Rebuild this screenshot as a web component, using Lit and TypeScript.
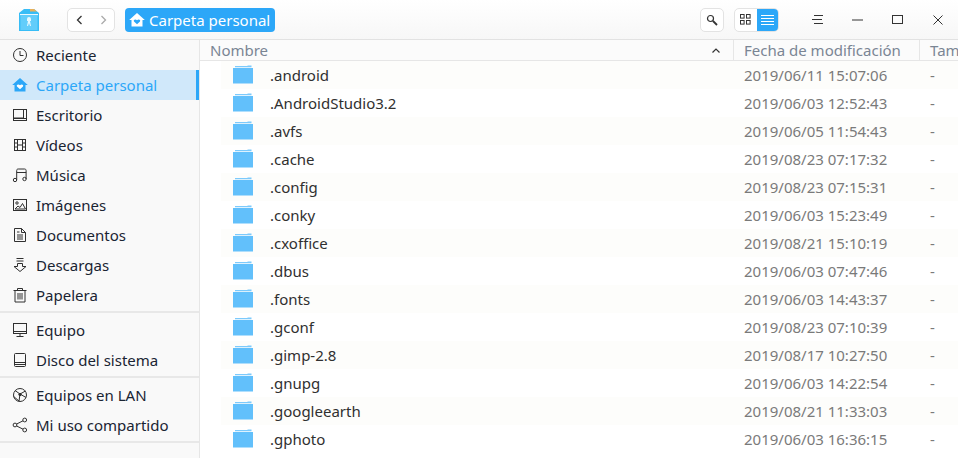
import { LitElement, html, css, svg } from "lit";
import { customElement } from "lit/decorators.js";

const s = (c: any, size = 16) => html`<svg class="ic" width=${size} height=${size} viewBox="0 0 16 16" fill="none" stroke="currentColor" stroke-width="1">${c}</svg>`;
const homeIcon = (col: string, heart: string) => html`<svg width="16" height="16" viewBox="0 0 16 16"><path fill=${col} d="M8 1 L15.8 8 L13.5 8 L13.5 14.5 L2.5 14.5 L2.5 8 L.2 8 Z"/><path fill=${heart} d="M8 12.2 L5 9.4 C4 8 6.4 6.5 8 8.2 C9.6 6.5 12 8 11 9.4 Z"/></svg>`;

const icons: Record<string, any> = {
  clock: s(svg`<circle cx="8" cy="8" r="6.5"/><path d="M8 4v4.5h3.5"/>`),
  desk: s(svg`<rect x="1.5" y="2.5" width="13" height="11"/><path d="M11.5 2.5v8.5h-10"/><path d="M1.5 11.5h13"/>`),
  video: s(svg`<rect x="2.5" y="2.5" width="11" height="11"/><path d="M5.5 2.5v11M10.5 2.5v11M2.5 6h3M2.5 10h3M10.5 6h3M10.5 10h3M5.5 8h5"/>`),
  music: s(svg`<circle cx="3" cy="13" r="1.7"/><circle cx="12.5" cy="12" r="1.7"/><path d="M4.7 13V3.5c0-1 .5-1.5 1.5-1.5h6.5c.7 0 1.4.5 1.4 1.5V12M4.7 5.5h9.5"/>`),
  image: s(svg`<rect x="1.5" y="2.5" width="13" height="11"/><circle cx="5" cy="6" r="1.2"/><path d="M3 12l3-3 2 1.5 2.5-4 3 5.5z"/>`),
  doc: s(svg`<path d="M2.5 1.5h7l4 4v9h-11z"/><path d="M9.5 1.5v4h4M5 5h2.5M5 8h6M5 10h6M5 12h6"/>`),
  down: s(svg`<path d="M4.5 1.5h7M4.5 4h7M5.5 6.5h5v3h3.5L8 14.5 2 9.5h3.5z"/>`),
  trash: s(svg`<path d="M1.5 3.5h13M5.5 3.5V1.5h5v2M3 3.5v11.5h10V3.5M6 6v6.5M8 6v6.5M10 6v6.5"/>`),
  pc: s(svg`<rect x="1.5" y="1.5" width="13" height="10"/><path d="M1.5 9.5h13M8 11.5v2.5M4.5 14.5h7"/>`),
  disk: s(svg`<rect x="2.5" y="1.5" width="11" height="13" rx="1"/><path d="M2.5 10.5h11M2.5 12.5h11"/>`),
  lan: s(svg`<circle cx="8" cy="8" r="6.5"/><path d="M3 3.5l5 3.5 5.5-3M8 7l-1 7.2M8 7l6 3.5M1.6 9.5l5.4 4.5" /><circle cx="8" cy="7.5" r="1.2" fill="currentColor"/>`),
  share: s(svg`<circle cx="3" cy="8" r="1.9"/><circle cx="12.7" cy="3" r="1.9"/><circle cx="12.7" cy="13" r="1.9"/><path d="M4.7 7l6.3-3.2M4.7 9l6.3 3.2"/>`),
};

const group1 = [
  ["clock", "Reciente"], ["home", "Carpeta personal"], ["desk", "Escritorio"], ["video", "Vídeos"], ["music", "Música"],
  ["image", "Imágenes"], ["doc", "Documentos"], ["down", "Descargas"], ["trash", "Papelera"],
];
const group2 = [["pc", "Equipo"], ["disk", "Disco del sistema"]];
const group3 = [["lan", "Equipos en LAN"], ["share", "Mi uso compartido"]];

const files = [
  [".android", "2019/06/11 15:07:06"], [".AndroidStudio3.2", "2019/06/03 12:52:43"], [".avfs", "2019/06/05 11:54:43"],
  [".cache", "2019/08/23 07:17:32"], [".config", "2019/08/23 07:15:31"], [".conky", "2019/06/03 15:23:49"],
  [".cxoffice", "2019/08/21 15:10:19"], [".dbus", "2019/06/03 07:47:46"], [".fonts", "2019/06/03 14:43:37"],
  [".gconf", "2019/08/23 07:10:39"], [".gimp-2.8", "2019/08/17 10:27:50"], [".gnupg", "2019/06/03 14:22:54"],
  [".googleearth", "2019/08/21 11:33:03"], [".gphoto", "2019/06/03 16:36:15"],
];

@customElement("app-root")
export class AppRoot extends LitElement {
  static styles = css`
    :host { display: block; width: 958px; height: 458px; overflow: hidden; background: #fff; font-family: "Noto Sans", sans-serif; font-size: 15px; color: #303030; }
    svg { display: block; flex: none; }
    .bar { height: 39px; border-bottom: 1px solid #e2e2e2; background: linear-gradient(#fff, #f7f7f7); display: flex; align-items: center; }
    .logo { margin-left: 19px; }
    .nav { margin-left: 28px; width: 46px; height: 22px; border: 1px solid #e3e3e3; border-radius: 5px; background: #fff; display: flex; }
    .nav span { flex: 1; display: flex; align-items: center; justify-content: center; }
    .crumb { margin-left: 10px; height: 24px; width: 150px; background: #2ca7f8; border-radius: 4px; color: #fff; display: flex; align-items: center; gap: 4px; padding-left: 4px; box-sizing: border-box; white-space: nowrap; }
    .spacer { flex: 1; }
    .search { width: 22px; height: 22px; border: 1px solid #e3e3e3; border-radius: 5px; background: #fff; display: flex; align-items: center; justify-content: center; }
    .views { margin-left: 10px; width: 43px; height: 22px; border: 1px solid #e3e3e3; border-radius: 5px; background: #fff; display: flex; overflow: hidden; }
    .views span { flex: 1; display: flex; align-items: center; justify-content: center; }
    .views .on { background: #2ca7f8; }
    .win { width: 40px; display: flex; justify-content: center; align-items: center; }
    .win.first { margin-left: 19px; }
    .main { display: flex; height: 418px; }
    .side { width: 199px; border-right: 1px solid #e6e6e6; background: #f9f9f9; flex: none; }
    .item { height: 30px; display: flex; align-items: center; color: #1a2433; padding-left: 12px; gap: 8px; white-space: nowrap; }
    .item .ic { color: #303030; }
    .item.active { background: #d0e8fa; color: #2ca7f8; border-right: 3px solid #2ca7f8; }
    .sep { height: 2px; background: #e8e8e8; margin: 1px 0 2px; }
    .content { flex: 1; min-width: 0; overflow: hidden; }
    .head { height: 20px; border-bottom: 1px solid #e6e6e6; display: flex; color: #7a8594; background: #fbfbfb; }
    .h { border-right: 1px solid #e6e6e6; box-sizing: border-box; line-height: 20px; padding-left: 10px; white-space: nowrap; flex: none; }
    .h.name { width: 534px; display: flex; align-items: center; justify-content: space-between; padding-right: 13px; }
    .h.date { width: 186px; }
    .h.size { border: 0; width: 38px; padding-left: 10px; }
    .rows { padding-left: 21px; }
    .row { height: 28px; display: flex; align-items: center; color: #303030; }
    .row:nth-child(odd) { background: #fdfdfb; }
    .folder { margin-left: 12px; }
    .fname { margin-left: 17px; width: 474px; flex: none; }
    .fdate { width: 186px; flex: none; color: #7a7a7a; }
    .fsize { color: #7a7a7a; }
  `;

  private item(i: string[], active = false) {
    return html`<div class="item ${active ? "active" : ""}">${i[0] === "home" ? homeIcon("#2ca7f8", "#fff") : icons[i[0]]}<span>${i[1]}</span></div>`;
  }

  render() {
    return html`
      <div class="bar">
        <svg class="logo" width="20" height="22" viewBox="0 0 20 22">
          <path d="M0 4 L5 0 H15 L20 4 V22 H0 Z" fill="#38bdf6"/>
          <path d="M11 0 H15 L18 2.5 H11 Z" fill="#e8b05a"/>
          <rect x="1" y="5" width="18" height="1.2" fill="#e9f8ff"/>
          <rect x="1.5" y="6.2" width="17" height="14.8" fill="#62cdfa"/>
          <path d="M10 8 a2 2 0 0 1 2 2 v2 h-1 l1 5 h-1 l-1-3 -1 3 h-1 l1-5 h-1 v-2 a2 2 0 0 1 2-2z" fill="#e4f8ff"/>
        </svg>
        <div class="nav">
          <span><svg width="10" height="12" viewBox="0 0 10 12" fill="none" stroke="#333" stroke-width="1.3"><path d="M6.5 2 L2.5 6 L6.5 10"/></svg></span>
          <span><svg width="10" height="12" viewBox="0 0 10 12" fill="none" stroke="#aaa" stroke-width="1.3"><path d="M3.5 2 L7.5 6 L3.5 10"/></svg></span>
        </div>
        <div class="crumb">${homeIcon("#fff", "#2ca7f8")}<span>Carpeta personal</span></div>
        <div class="spacer"></div>
        <div class="search"><svg width="12" height="12" viewBox="0 0 12 12" fill="none" stroke="#333"><circle cx="4.5" cy="4.5" r="3" stroke-width="1.2"/><path d="M7 7 L11 11" stroke-width="1.8"/></svg></div>
        <div class="views">
          <span><svg width="11" height="11" viewBox="0 0 11 11" fill="none" stroke="#333"><rect x=".5" y=".5" width="3.6" height="3.6"/><rect x="6.5" y=".5" width="3.6" height="3.6"/><rect x=".5" y="6.5" width="3.6" height="3.6"/><rect x="6.5" y="6.5" width="3.6" height="3.6"/></svg></span>
          <span class="on"><svg width="13" height="11" viewBox="0 0 13 11" stroke="#fff"><path d="M0 1.5h13M0 4.5h13M0 7.5h13M0 10.5h13"/></svg></span>
        </div>
        <div class="win first"><svg width="12" height="10" viewBox="0 0 12 10" stroke="#333"><path d="M2 .5h9M0 4.5h10M2 8.5h9"/></svg></div>
        <div class="win"><svg width="12" height="2" viewBox="0 0 12 2" stroke="#333"><path d="M0 1h11"/></svg></div>
        <div class="win"><svg width="12" height="10" viewBox="0 0 12 10" fill="none" stroke="#333"><rect x=".5" y=".5" width="10" height="8"/></svg></div>
        <div class="win"><svg width="10" height="10" viewBox="0 0 10 10" stroke="#333"><path d="M.5.5l9 9M9.5.5l-9 9"/></svg></div>
      </div>
      <div class="main">
        <div class="side">
          ${group1.map((i, n) => this.item(i, n === 1))}
          <div class="sep"></div>
          ${group2.map((i) => this.item(i))}
          <div class="sep"></div>
          ${group3.map((i) => this.item(i))}
          <div class="sep"></div>
        </div>
        <div class="content">
          <div class="head">
            <div class="h name"><span>Nombre</span><svg width="8" height="5" viewBox="0 0 8 5" fill="none" stroke="#333" stroke-width="1.2"><path d="M.5 4.5L4 1l3.5 3.5"/></svg></div>
            <div class="h date">Fecha de modificación</div>
            <div class="h size">Tam</div>
          </div>
          <div class="rows">
            ${files.map((f) => html`<div class="row">
              <svg class="folder" width="20" height="20" viewBox="0 0 20 20"><path d="M2 1 H14 L15 .5 H18.5 V2.2 H2 Z" fill="#7ccafc"/><rect y="3" width="20" height="15.5" fill="#62c0fb"/></svg>
              <span class="fname">${f[0]}</span><span class="fdate">${f[1]}</span><span class="fsize">-</span>
            </div>`)}
          </div>
        </div>
      </div>
    `;
  }
}
